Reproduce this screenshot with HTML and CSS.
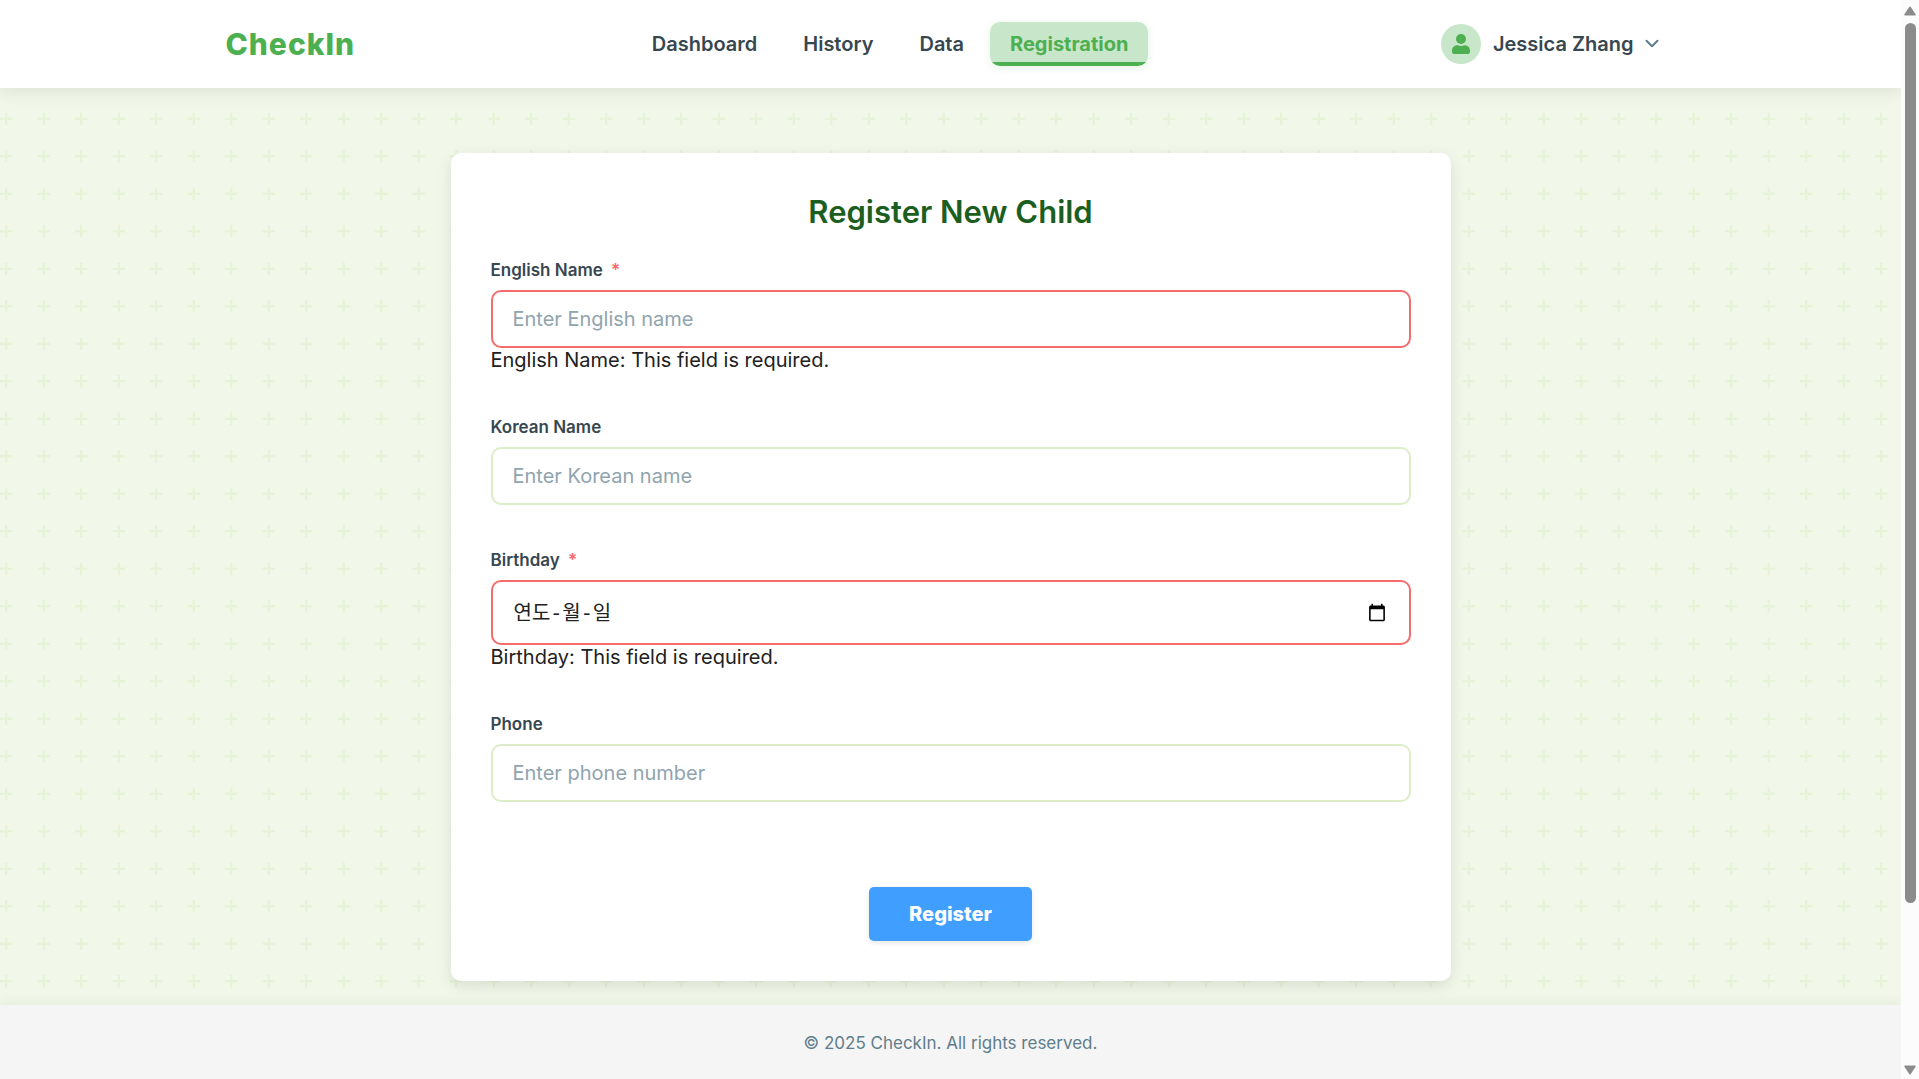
FILE: index.html
```html
<!DOCTYPE html>
<html lang="en">
<head>
<meta charset="utf-8">
<meta name="viewport" content="width=device-width, initial-scale=1">
<title>Register New Child - CheckIn</title>
<link rel="stylesheet" href="styles.css">
</head>
<body>
<div class="page">
  <header class="header">
    <div class="header-inner">
      <a class="logo" href="#">CheckIn</a>
      <nav class="nav">
        <a class="nav-link" href="#">Dashboard</a>
        <a class="nav-link" href="#">History</a>
        <a class="nav-link" href="#">Data</a>
        <a class="nav-link nav-link-active" href="#" aria-current="page">Registration</a>
      </nav>
      <button class="user" type="button">
        <span class="avatar">
          <svg width="18" height="20" viewBox="0 0 18 20" aria-hidden="true"><circle cx="9" cy="5" r="5"/><path d="M5.400 11.250C6.600 11.800 7.800 12 9 12s2.400-.2 3.600-.75C15.800 11.250 18 13.500 18 16.600v1.500c0 1.100-.8 1.900-1.900 1.900H1.900C.8 20 0 19.200 0 18.100v-1.500c0-3.100 2.200-5.350 5.400-5.350z"/></svg>
        </span>
        <span>Jessica Zhang</span>
        <svg class="chevron" width="14" height="10" viewBox="0 0 14 10" aria-hidden="true"><path d="M1.500 1.800 7 7.200l5.500-5.400"/></svg>
      </button>
    </div>
  </header>

  <main class="main">
    <form class="card" novalidate>
      <h1 class="title">Register New Child</h1>

      <div class="field">
        <label class="label" for="english-name">English Name <span class="required">*</span></label>
        <input class="input input-invalid" id="english-name" type="text" placeholder="Enter English name" aria-describedby="english-name-error">
        <div class="error" id="english-name-error">English Name: This field is required.</div>
      </div>

      <div class="field">
        <label class="label" for="korean-name">Korean Name</label>
        <input class="input" id="korean-name" type="text" placeholder="Enter Korean name">
      </div>

      <div class="field">
        <label class="label" for="birthday">Birthday <span class="required">*</span></label>
        <div class="date">
          <input class="input input-date input-invalid" id="birthday" type="date" aria-describedby="birthday-error">
          <span class="date-hint" lang="ko">연도-월-일</span>
        </div>
        <div class="error" id="birthday-error">Birthday: This field is required.</div>
      </div>

      <div class="field">
        <label class="label" for="phone">Phone</label>
        <input class="input" id="phone" type="tel" placeholder="Enter phone number">
      </div>

      <div class="actions">
        <button class="submit" type="submit">Register</button>
      </div>
    </form>
  </main>

  <footer class="footer">© 2025 CheckIn. All rights reserved.</footer>
</div>

<div class="scrollbar" aria-hidden="true">
  <svg width="12" height="10" viewBox="0 0 12 10"><path d="M5.200 1 .4 8.200Q0 9.500 1.200 9.500h9.600Q12 9.500 11.600 8.200L6.800 1Q6 0 5.200 1z"/></svg>
  <div class="track"><div class="thumb"></div></div>
  <svg width="12" height="10" viewBox="0 0 12 10"><path d="M5.200 9 .4 1.800Q0 .5 1.200 .5h9.600Q12 .5 11.600 1.800L6.800 9Q6 10 5.200 9z"/></svg>
</div>
</body>
</html>
```
FILE: styles.css
```css
* {
  box-sizing: border-box;
}

body {
  margin: 0;
  padding-right: 18px;
  font-family: Inter, "Noto Sans CJK KR", sans-serif;
  font-size: 20px;
  line-height: 24px;
  color: #212121;
  background-color: #f1f8e9;
  background-image: url("data:image/svg+xml,%3Csvg width='60' height='60' viewBox='0 0 60 60' xmlns='http://www.w3.org/2000/svg'%3E%3Cpath fill='%23dcedc8' fill-opacity='0.5' d='M36 34v-4h-2v4h-4v2h4v4h2v-4h4v-2h-4zm0-30V0h-2v4h-4v2h4v4h2V6h4V4h-4zM6 34v-4H4v4H0v2h4v4h2v-4h4v-2H6zM6 4V0H4v4H0v2h4v4h2V6h4V4H6z'/%3E%3C/svg%3E");
  background-size: 75px 75px;
}

input,
button {
  font: inherit;
}

.page {
  display: flex;
  flex-direction: column;
  min-height: 100vh;
}

.header {
  background: #fff;
  box-shadow: 0 5px 15px rgba(0, 0, 0, 0.08);
}

.header-inner {
  display: flex;
  align-items: center;
  justify-content: space-between;
  max-width: 1500px;
  min-height: 88px;
  margin: 0 auto;
  padding: 0 25px;
}

.logo {
  font-size: 30px;
  font-weight: 800;
  line-height: 36px;
  letter-spacing: 1px;
  color: #4caf50;
  text-decoration: none;
}

.nav {
  display: flex;
  gap: 6px;
}

.nav-link {
  padding: 10px 20px;
  border-radius: 10px;
  font-weight: 600;
  color: #37474f;
  text-decoration: none;
}

.nav-link-active {
  color: #4caf50;
  background: linear-gradient(to top, #4caf50 4px, #c8e6c9 4px);
  box-shadow: 0 2px 8px rgba(76, 175, 80, 0.15);
  font-weight: 700;
}

.user {
  display: flex;
  align-items: center;
  gap: 12px;
  padding: 0 16px;
  border: 0;
  background: none;
  font-weight: 600;
  color: #37474f;
}

.avatar {
  display: flex;
  align-items: center;
  justify-content: center;
  width: 40px;
  height: 40px;
  border-radius: 50%;
  background: #c8e6c9;
  fill: #4caf50;
}

.chevron {
  fill: none;
  stroke: #607d8b;
  stroke-width: 2;
  stroke-linecap: round;
  stroke-linejoin: round;
}

.main {
  flex: 1;
  padding: 65px 24px 24px;
}

.card {
  max-width: 1000px;
  margin: 0 auto;
  padding: 40px;
  border-radius: 10px;
  background: #fff;
  box-shadow: 0 5px 15px rgba(0, 0, 0, 0.1);
}

.title {
  margin: 0 0 27px;
  font-size: 31px;
  font-weight: 600;
  line-height: 38px;
  text-align: center;
  color: #1b5e20;
}

.field {
  margin-bottom: 43px;
}

.label {
  display: block;
  margin-bottom: 8px;
  font-size: 17px;
  font-weight: 600;
  color: #37474f;
}

.required {
  margin-left: 4px;
  color: #f56c6c;
}

.input {
  display: block;
  width: 100%;
  height: 58px;
  padding: 0 20px;
  border: 2px solid #dcedc8;
  border-radius: 10px;
  background: #fff;
  color: #212121;
}

.input::placeholder {
  color: #90a4ae;
}

.input-invalid {
  border-color: #f56c6c;
}

.date {
  position: relative;
}

.input-date {
  height: 65px;
}

.input-date::-webkit-datetime-edit {
  opacity: 0;
}

.date-hint {
  position: absolute;
  top: 23px;
  left: 23px;
  font-family: "Liberation Mono", "Noto Sans CJK KR", monospace;
  pointer-events: none;
}

.actions {
  padding-top: 42px;
  text-align: center;
}

.submit {
  height: 54px;
  padding: 0 40px;
  border: 0;
  border-radius: 5px;
  background: #409eff;
  box-shadow: 0 2px 5px rgba(0, 0, 0, 0.1);
  font-weight: 800;
  color: #fff;
}

.footer {
  padding: 26px 24px 24px;
  background: #f5f5f5;
  box-shadow: 0 -2px 12px rgba(0, 0, 0, 0.06);
  font-size: 17px;
  text-align: center;
  color: #607d8b;
}

.scrollbar {
  position: fixed;
  top: 0;
  right: 0;
  bottom: 0;
  display: flex;
  flex-direction: column;
  align-items: center;
  gap: 7px;
  width: 18px;
  padding: 6px 0 4px;
  background: #fcfcfc;
  fill: #8b8b8b;
}

.track {
  flex: 1;
}

.thumb {
  width: 11px;
  height: 85%;
  border-radius: 6px;
  background: #8b8b8b;
}
```
